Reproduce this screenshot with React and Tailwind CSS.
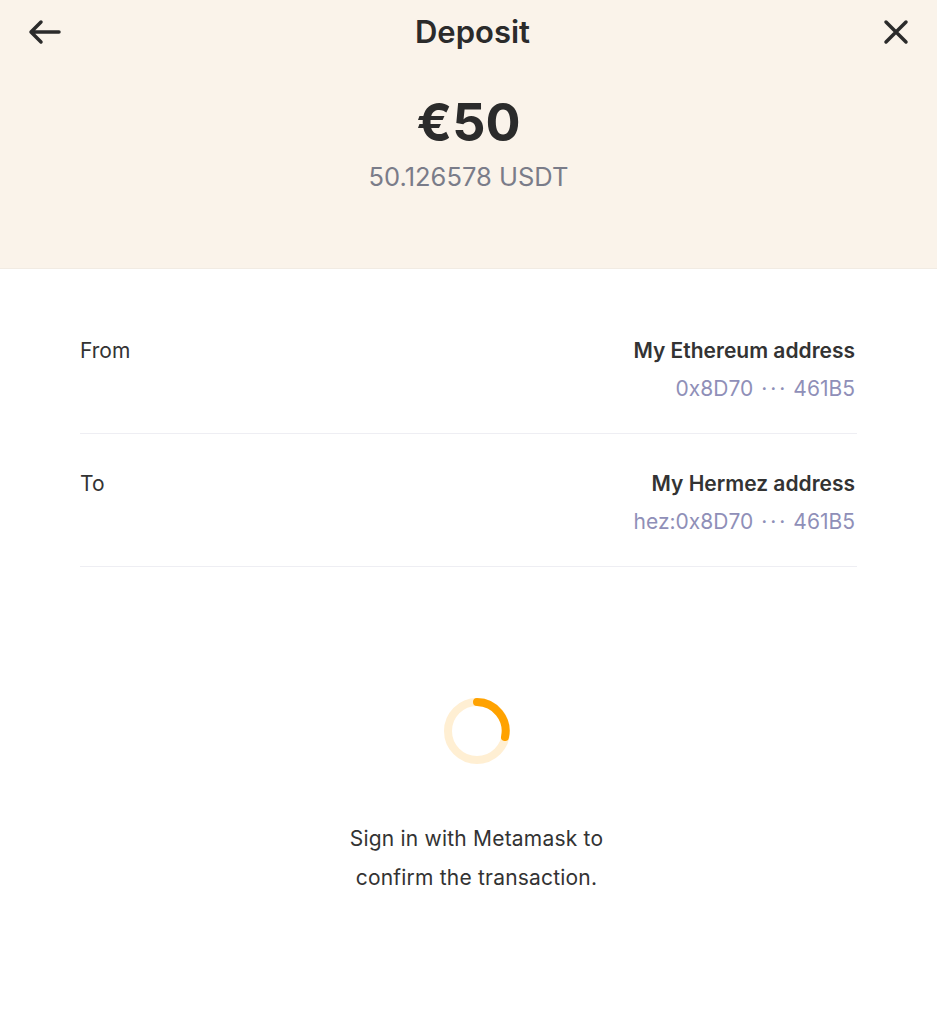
import React from 'react';

const font = { fontFamily: 'Inter, "Open Sans", sans-serif' };

const Dots = () => <span className="tracking-[3px] ml-[8px] mr-[5px]">···</span>;

const AddressRow = ({ label, name, prefix }) => (
  <div className="pt-[36px] pb-[30px] border-b border-[#eeeef3] flex justify-between">
    <span className="text-[21px] leading-[28px] text-[#333]">{label}</span>
    <div className="flex flex-col items-end gap-[10px] pr-[2px]">
      <span className="text-[21px] leading-[28px] font-semibold text-[#333]">{name}</span>
      <span className="text-[21px] leading-[28px] text-[#8f8fb8]">
        {prefix}0x8D70<Dots />461B5
      </span>
    </div>
  </div>
);

const Spinner = () => (
  <svg width="68" height="68" viewBox="0 0 68 68">
    <circle cx="34" cy="34" r="29" fill="none" stroke="#ffefd3" strokeWidth="8" />
    <path d="M34 5 A29 29 0 0 1 62 40" fill="none" stroke="#ffa200" strokeWidth="8" strokeLinecap="round" />
  </svg>
);

export default function App() {
  return (
    <div className="min-h-screen bg-white" style={font}>
      <div className="h-[269px] bg-[#faf3ea] border-b border-[#f1ebe3]">
        <div className="h-16 px-7 flex items-center justify-between">
          <svg width="34" height="26" viewBox="0 0 34 26" fill="none" stroke="#2b2b2b" strokeWidth="3.5" strokeLinecap="round" strokeLinejoin="round">
            <path d="M31 13H3M13 3L3 13l10 10" />
          </svg>
          <h1 className="text-[31px] font-semibold text-[#2b2b2b]">Deposit</h1>
          <svg width="26" height="26" viewBox="0 0 26 26" fill="none" stroke="#2b2b2b" strokeWidth="3.5" strokeLinecap="round">
            <path d="M3 3l20 20M23 3L3 23" />
          </svg>
        </div>
        <div className="flex flex-col items-center mt-[31px]">
          <div className="text-[52px] leading-[56px] font-bold text-[#2b2b2b]">€50</div>
          <div className="mt-[10px] text-[25.5px] leading-[32px] text-[#7a7c89]">50.126578 USDT</div>
        </div>
      </div>

      <div className="px-20 pt-8">
        <AddressRow label="From" name="My Ethereum address" prefix="" />
        <AddressRow label="To" name="My Hermez address" prefix="hez:" />
      </div>

      <div className="flex flex-col items-center pt-[130px] pl-4">
        <Spinner />
        <p className="mt-[54px] text-center text-[21px] leading-[39px] tracking-[0.2px] text-[#333]">
          Sign in with Metamask to
          <br />
          confirm the transaction.
        </p>
      </div>
    </div>
  );
}
